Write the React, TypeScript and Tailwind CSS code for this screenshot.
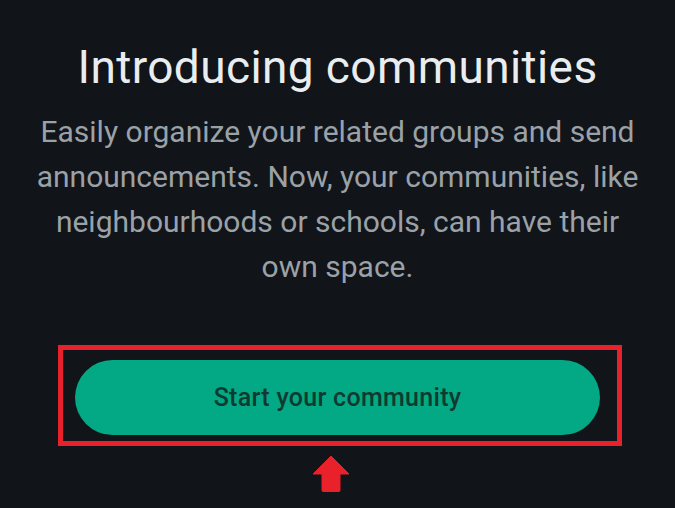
const UpArrow = () => (
    <svg width="38" height="37" viewBox="0 0 38 37" aria-hidden="true">
        <path
            d="M19 1 L37 19 L28 19 L28 35 Q28 37 26 37 L12 37 Q10 37 10 35 L10 19 L1 19 Z"
            fill="#e8212b"
            stroke="#e8212b"
            strokeWidth="1"
            strokeLinejoin="round"
        />
    </svg>
);

const App = () => {
    return (
        <main className="w-[675px] h-[508px] bg-[#111419] flex flex-col items-center overflow-hidden font-['Roboto',sans-serif]">
            <h1 className="mt-10 text-[46px] leading-[54px] font-normal text-[#e9edef] tracking-[0.4px]">
                Introducing communities
            </h1>
            <p className="mt-[15px] w-[606px] text-center text-[30px] leading-[45px] text-[#9aa2a8]">
                Easily organize your related groups and send announcements. Now, your communities, like
                neighbourhoods or schools, can have their own space.
            </p>

            <div className="mt-[56px] ml-[5px] w-[564px] h-[101px] border-[5px] border-[#e8212b] pl-3 pr-[17px] pt-[10px] pb-[6px]">
                <button className="w-full h-full rounded-full bg-[#03a884] text-[25px] font-medium text-[#0f3a31] tracking-[0.3px]">
                    Start your community
                </button>
            </div>

            <div className="mt-[9px] mr-[13px]">
                <UpArrow />
            </div>
        </main>
    );
};

export default App;
